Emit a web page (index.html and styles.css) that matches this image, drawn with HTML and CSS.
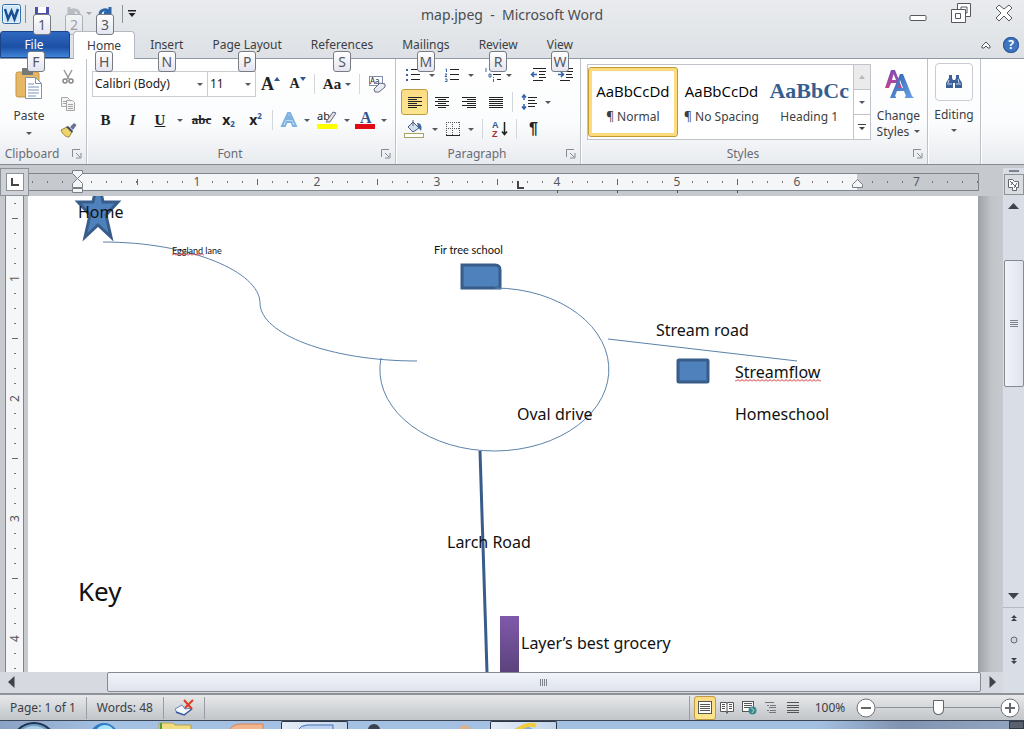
FILE: index.html
```html
<!DOCTYPE html>
<html lang="en">
<head>
    <meta charset="UTF-8">
    <meta name="viewport" content="width=device-width, initial-scale=1.0">
    <title>map.jpeg - Microsoft Word</title>
    <link rel="stylesheet" href="styles.css">
</head>
<body>
    <header class="titlebar">
        <div class="quick-access">
            <svg class="word-logo" width="19" height="20" viewBox="0 0 19 20">
                <rect x="0.5" y="0.5" width="18" height="19" rx="2" fill="#eaf4fc" stroke="#2f6ea8"/>
                <rect x="2" y="2" width="15" height="16" fill="#d3e6f5"/>
                <path d="M3 5l3 10 3.500-8 3 8 3.500-10" fill="none" stroke="#174f94" stroke-width="2.500"/>
            </svg>
            <span class="divider"></span>
            <button class="qa-btn" aria-label="Save">
                <svg width="16" height="16" viewBox="0 0 16 16"><rect x="1" y="1" width="14" height="14" fill="#4b50a8"/><rect x="4" y="1" width="8" height="6" fill="#fff"/><rect x="4" y="9" width="8" height="6" fill="#c8cbe8"/></svg>
                <kbd class="keytip">1</kbd>
            </button>
            <button class="qa-btn faded" aria-label="Undo">
                <svg width="16" height="16" viewBox="0 0 16 16"><path d="M3 1v6h6M3 7c3-5 10-4 10 2 0 3-2 5-5 5" fill="none" stroke="#8d949c" stroke-width="3"/></svg>
                <kbd class="keytip">2</kbd>
            </button>
            <span class="caret light"></span>
            <button class="qa-btn" aria-label="Redo">
                <svg width="16" height="16" viewBox="0 0 16 16"><path d="M13 1v6H7M13 7C10 2 3 3 3 9c0 3 2 5 5 5" fill="none" stroke="#2c66ad" stroke-width="3"/></svg>
                <kbd class="keytip">3</kbd>
            </button>
            <span class="divider"></span>
            <button class="qa-more" aria-label="Customize toolbar">
                <svg width="8" height="7" viewBox="0 0 8 7"><path d="M0 0h8v1.500H0zM0.500 3h7L4 7z" fill="#222"/></svg>
            </button>
        </div>
        <h1 class="title">map.jpeg &nbsp;-&nbsp; Microsoft Word</h1>
        <div class="window-buttons">
            <button aria-label="Minimize"><svg width="18" height="20" viewBox="0 0 18 20"><rect x="1" y="12.500" width="16" height="5" rx="1" fill="#fff" stroke="#55585e"/></svg></button>
            <button aria-label="Restore"><svg width="22" height="20" viewBox="0 0 22 20"><g fill="#fff" stroke="#55585e"><path d="M7.500 0.500h13v13h-13z"/><path d="M11 4h6v6h-6z"/><path d="M1.500 6.500h14v13h-14z"/><path d="M5.500 10.500h5v5h-5z"/></g></svg></button>
            <button aria-label="Close"><svg width="18" height="18" viewBox="0 0 18 18"><path d="M1 4L4 1l5 4 5-4 3 3-5 5 5 5-3 3-5-5-5 5-3-3 5-5z" fill="#fff" stroke="#55585e"/></svg></button>
        </div>
    </header>

    <nav class="tabs">
        <button class="tab file">File<kbd class="keytip">F</kbd></button>
        <button class="tab active">Home<kbd class="keytip">H</kbd></button>
        <button class="tab">Insert<kbd class="keytip">N</kbd></button>
        <button class="tab">Page Layout<kbd class="keytip">P</kbd></button>
        <button class="tab">References<kbd class="keytip">S</kbd></button>
        <button class="tab">Mailings<kbd class="keytip">M</kbd></button>
        <button class="tab">Review<kbd class="keytip">R</kbd></button>
        <button class="tab">View<kbd class="keytip">W</kbd></button>
        <div class="tab-tools">
            <button aria-label="Minimize ribbon"><svg width="10" height="8" viewBox="0 0 10 8"><path d="M1 5l4-4 4 4v2H7L5 5 3 7H1z" fill="#fff" stroke="#55585e"/></svg></button>
            <button class="help" aria-label="Help">?</button>
        </div>
    </nav>

    <section class="ribbon">
        <div class="group clipboard">
            <div class="group-body">
                <button class="big-btn">
                    <svg width="28" height="32" viewBox="0 0 28 32"><rect x="1" y="4" width="23" height="25" rx="2" fill="#e6b865" stroke="#c39445"/><rect x="7" y="0" width="11" height="7" fill="#777"/><path d="M10.500 9.500h10l6 6v15h-16z" fill="#fff" stroke="#8593ad"/><path d="M20.500 9.500v6h6M13 16h6M13 19h11M13 22h11M13 25h11M13 28h8" fill="none" stroke="#7c93bb"/></svg>
                    <span>Paste</span>
                    <span class="caret"></span>
                </button>
                <div class="clip-tools">
                    <button class="tool" aria-label="Cut"><svg width="12" height="16" viewBox="0 0 12 16"><path d="M2 1l5 9M10 1L5 10" stroke="#999" stroke-width="1.500"/><circle cx="3" cy="12" r="2" fill="none" stroke="#888" stroke-width="1.500"/><circle cx="9" cy="12" r="2" fill="none" stroke="#888" stroke-width="1.500"/></svg></button>
                    <button class="tool" aria-label="Copy"><svg width="16" height="14" viewBox="0 0 16 14"><g fill="#f4f4f4" stroke="#a5a5a5"><path d="M1.500 0.500h6l2 2v7h-8z"/><path d="M6.500 3.500h6l2 2v8h-8z"/><path d="M3 4.500h3M3 6.500h3M8 7.500h5M8 9.500h5M8 11.500h5"/></g></svg></button>
                    <button class="tool" aria-label="Format Painter"><svg width="17" height="15" viewBox="0 0 17 15"><path d="M1 7l6-3 5 5-3 5c-3 0-6-2-8-7z" fill="#ecd46b" stroke="#9c8438"/><path d="M6 4l2-1 5 5-1 2z" fill="#444a63"/><path d="M10 4l4-4 2.500 2L13 7z" fill="#6c7392"/></svg></button>
                </div>
            </div>
            <div class="group-label"><span>Clipboard</span><button class="launcher" aria-label="Clipboard options"><svg width="10" height="10" viewBox="0 0 10 10"><path d="M0.500 8V0.500H8M4 4l4 4M9 4v5H4" fill="none" stroke="#858b93"/></svg></button></div>
        </div>

        <div class="group font">
            <div class="group-body rows">
                <div class="row">
                    <select class="combo font-name" aria-label="Font"><option>Calibri (Body)</option></select>
                    <select class="combo font-size" aria-label="Font size"><option>11</option></select>
                    <button class="tool serif grow" aria-label="Grow font">A<svg width="6" height="4" viewBox="0 0 6 4"><path d="M3 0l3 4H0z" fill="#31558f"/></svg></button>
                    <button class="tool serif shrink" aria-label="Shrink font">A<svg width="6" height="4" viewBox="0 0 6 4"><path d="M0 0h6L3 4z" fill="#31558f"/></svg></button>
                    <span class="sep"></span>
                    <button class="tool split serif" aria-label="Change case">Aa<span class="caret"></span></button>
                    <span class="sep"></span>
                    <button class="tool" aria-label="Clear formatting"><svg width="18" height="18" viewBox="0 0 18 18"><rect x="1.500" y="1.500" width="13" height="9" fill="#fff" stroke="#7e8fae"/><text x="2" y="9" class="mini">Aa</text><path d="M6 14l6-6 5 1v3l-6 5H7z" fill="#e9ebf2" stroke="#626b80"/></svg></button>
                </div>
                <div class="row">
                    <button class="tool serif">B</button>
                    <button class="tool serif italic">I</button>
                    <button class="tool split serif"><u>U</u><span class="caret"></span></button>
                    <button class="tool serif strike">abc</button>
                    <button class="tool script">x<sub>2</sub></button>
                    <button class="tool script">x<sup>2</sup></button>
                    <span class="sep"></span>
                    <button class="tool split" aria-label="Text effects"><svg width="18" height="18" viewBox="0 0 18 18"><path d="M2 15L8 2h2l6 13h-3l-1.500-4h-5L5 15zM7 8.500h4L9 5z" fill="#fff" stroke="#7fb2e0" stroke-width="2"/></svg><span class="caret"></span></button>
                    <button class="tool split" aria-label="Highlight"><svg width="22" height="20" viewBox="0 0 22 20"><text x="1" y="10" class="ab">ab</text><path d="M10 12l7-10 3 1-6 9z" fill="#dfe3ec" stroke="#626b80"/><rect x="1" y="14" width="20" height="5" fill="#ffff00"/></svg><span class="caret"></span></button>
                    <button class="tool split" aria-label="Font color"><svg width="20" height="20" viewBox="0 0 20 20"><text x="5" y="13" class="color-a">A</text><rect x="0" y="14" width="20" height="5" fill="#e00b15"/></svg><span class="caret"></span></button>
                </div>
            </div>
            <div class="group-label"><span>Font</span><button class="launcher" aria-label="Font options"><svg width="10" height="10" viewBox="0 0 10 10"><path d="M0.500 8V0.500H8M4 4l4 4M9 4v5H4" fill="none" stroke="#858b93"/></svg></button></div>
        </div>

        <div class="group paragraph">
            <div class="group-body rows">
                <div class="row">
                    <button class="tool split" aria-label="Bullets"><svg width="15" height="14" viewBox="0 0 15 14"><path d="M5 1.500h9M5 6.500h9M5 11.500h9" stroke="#222"/><path d="M0 2h2M0 7h2M0 12h2" stroke="#3c64a0" stroke-width="2"/></svg><span class="caret"></span></button>
                    <button class="tool split" aria-label="Numbering"><svg width="15" height="14" viewBox="0 0 15 14"><path d="M5 1.500h9M5 6.500h9M5 11.500h9" stroke="#222"/><path d="M0.500 1h1v3M0 6h2L0 8.500h2M0 11h2v2.500H0" fill="none" stroke="#3c64a0"/></svg><span class="caret"></span></button>
                    <button class="tool split multilevel" aria-label="Multilevel list"><svg width="17" height="14" viewBox="0 0 17 14"><path d="M4 1.500h12M8 6.500h8M12 11.500h4" stroke="#222"/><path d="M1 0v4M4 6h2v3H4zM8.500 9v1M8.500 11v3" fill="none" stroke="#3c64a0"/></svg><span class="caret"></span></button>
                    <span class="space"></span>
                    <button class="tool" aria-label="Decrease indent"><svg width="15" height="14" viewBox="0 0 15 14"><path d="M2 0.500h13M8 3.500h7M8 6.500h6M8 9.500h7M2 12.500h10" stroke="#222"/><path d="M6 6.500H1M3 4L0.500 6.500 3 9" fill="none" stroke="#2f62ac" stroke-width="1.500"/></svg></button>
                    <button class="tool" aria-label="Increase indent"><svg width="15" height="14" viewBox="0 0 15 14"><path d="M2 0.500h13M8 3.500h7M8 6.500h6M8 9.500h7M2 12.500h10" stroke="#222"/><path d="M0 6.500h5M3 4l2.500 2.500L3 9" fill="none" stroke="#2f62ac" stroke-width="1.500"/></svg></button>
                </div>
                <div class="row">
                    <button class="tool pressed" aria-label="Align left"><svg width="14" height="11" viewBox="0 0 14 11"><path d="M0 0.500h14M0 2.500h9M0 4.500h14M0 6.500h9M0 8.500h14M0 10.500h9" stroke="#222"/></svg></button>
                    <button class="tool" aria-label="Center"><svg width="14" height="11" viewBox="0 0 14 11"><path d="M0 0.500h14M3 2.500h8M0 4.500h14M3 6.500h8M0 8.500h14M3 10.500h8" stroke="#222"/></svg></button>
                    <button class="tool" aria-label="Align right"><svg width="14" height="11" viewBox="0 0 14 11"><path d="M0 0.500h14M5 2.500h9M0 4.500h14M5 6.500h9M0 8.500h14M5 10.500h9" stroke="#222"/></svg></button>
                    <button class="tool" aria-label="Justify"><svg width="14" height="11" viewBox="0 0 14 11"><path d="M0 0.500h14M0 2.500h14M0 4.500h14M0 6.500h14M0 8.500h14M0 10.500h14" stroke="#222"/></svg></button>
                    <span class="sep"></span>
                    <button class="tool split" aria-label="Line spacing"><svg width="16" height="16" viewBox="0 0 16 16"><path d="M7 3.500h9M7 6.500h7M7 9.500h9M7 12.500h7" stroke="#222"/><path d="M3 1v5M1 3.500L3 1l2 2.500M3 10v5M1 12.500L3 15l2-2.500" fill="none" stroke="#2f62ac" stroke-width="1.500"/></svg><span class="caret"></span></button>
                </div>
                <div class="row">
                    <button class="tool split" aria-label="Shading"><svg width="20" height="18" viewBox="0 0 20 18"><path d="M4 7l5-5 6 6-6 4z" fill="#d5deec" stroke="#4c5f84"/><path d="M9 6V0" stroke="#4c5f84"/><path d="M13 3c5 0 5 5 4 8l-3-4z" fill="#44669b"/><rect x="0.500" y="13.500" width="19" height="4" fill="#fff" stroke="#a8a567"/></svg><span class="caret"></span></button>
                    <button class="tool split" aria-label="Borders"><svg width="14" height="14" viewBox="0 0 14 14"><path d="M0.500 0v13M13.500 0v13M6.500 0v13M0 0.500h13M0 6.500h13" stroke="#555" stroke-dasharray="1 1"/><path d="M0 13.500h14" stroke="#222"/></svg><span class="caret"></span></button>
                    <span class="sep"></span>
                    <button class="tool" aria-label="Sort"><svg width="16" height="18" viewBox="0 0 16 18"><text x="0" y="8" class="sort-a">A</text><text x="0" y="17" class="sort-z">Z</text><path d="M12.500 2v12M10 11.500l2.500 3 2.500-3" fill="none" stroke="#222" stroke-width="1.500"/></svg></button>
                    <span class="sep"></span>
                    <button class="tool pilcrow" aria-label="Show marks">¶</button>
                </div>
            </div>
            <div class="group-label"><span>Paragraph</span><button class="launcher" aria-label="Paragraph options"><svg width="10" height="10" viewBox="0 0 10 10"><path d="M0.500 8V0.500H8M4 4l4 4M9 4v5H4" fill="none" stroke="#858b93"/></svg></button></div>
        </div>

        <div class="group styles">
            <div class="group-body">
                <div class="gallery">
                    <button class="style-card selected"><span class="sample">AaBbCcDd</span><span>¶ Normal</span></button>
                    <button class="style-card"><span class="sample">AaBbCcDd</span><span>¶ No Spacing</span></button>
                    <button class="style-card"><span class="sample heading">AaBbCc</span><span>Heading 1</span></button>
                    <div class="gallery-scroll">
                        <button class="dim" aria-label="Previous row"><svg width="6" height="4" viewBox="0 0 6 4"><path d="M3 0l3 4H0z" fill="#b5b9be"/></svg></button>
                        <button aria-label="Next row"><span class="caret"></span></button>
                        <button aria-label="More styles"><svg width="8" height="7" viewBox="0 0 8 7"><path d="M0 0h8v1H0zM1 3h6L4 6z" fill="#444"/></svg></button>
                    </div>
                </div>
                <button class="big-btn change-styles">
                    <svg width="30" height="32" viewBox="0 0 30 32">
                        <defs>
                            <linearGradient id="purple" x1="0" y1="0" x2="0" y2="1"><stop offset="0" stop-color="#7d4fb5"/><stop offset="1" stop-color="#c04391"/></linearGradient>
                            <linearGradient id="blue" x1="0" y1="0" x2="1" y2="1"><stop offset="0" stop-color="#2f5fae"/><stop offset="1" stop-color="#6ba2e6"/></linearGradient>
                        </defs>
                        <path d="M1 20L7 2h4l7 18h-4l-2-5H7l-2 5zM8 12h4L9.500 6z" fill="url(#purple)"/>
                        <path fill-rule="evenodd" d="M6 30L16 6h3l9 22 2 2h-9v-1l1-1-2-5h-7l-2 5 1 1v1zM14 20h5l-3-8z" fill="url(#blue)"/>
                    </svg>
                    <span>Change<br>Styles <i class="caret"></i></span>
                </button>
            </div>
            <div class="group-label"><span>Styles</span><button class="launcher" aria-label="Styles options"><svg width="10" height="10" viewBox="0 0 10 10"><path d="M0.500 8V0.500H8M4 4l4 4M9 4v5H4" fill="none" stroke="#858b93"/></svg></button></div>
        </div>

        <div class="group editing">
            <button class="big-btn">
                <span class="icon-box">
                    <svg width="16" height="14" viewBox="0 0 16 14"><path d="M3 0h3v3l1 2v8H0V8l3-5zM10 0h3v3l3 5v5H9V5l1-2z" fill="#3b5f97"/><path d="M6 5h4v3H6z" fill="#3b5f97"/><path d="M1 9h5M10 9h5M3 5l-1 3M12 4l1 4" stroke="#c5d6ee"/></svg>
                </span>
                <span>Editing</span>
                <span class="caret"></span>
            </button>
        </div>
    </section>

    <main class="workspace">
        <div class="editor">
            <div class="ruler-row">
                <button class="tab-stop" aria-label="Tab selector"><span><svg width="8" height="8" viewBox="0 0 8 8"><path d="M1 0v7H8" fill="none" stroke="#444" stroke-width="2"/></svg></span></button>
                <div class="ruler">
                    <span class="inch margin-left"></span>
                    <span class="inch half"></span>
                    <span class="inch"><b>1</b></span>
                    <span class="inch"><b>2</b></span>
                    <span class="inch"><b>3</b></span>
                    <span class="inch"><b>4</b></span>
                    <span class="inch"><b>5</b></span>
                    <span class="inch"><b>6</b></span>
                    <span class="inch last"><b>7</b></span>
                    <svg class="markers" width="950" height="24" viewBox="0 0 950 24">
                        <g fill="#f4f5f7" stroke="#7a7f86">
                            <path d="M43.500 0.500h10v3l-5 5-5-5z"/>
                            <path d="M43.500 17.500v-4l5-5 5 5v4z"/>
                            <path d="M43.500 18.500h10v4h-10z"/>
                            <path d="M823.500 17.500v-3l5-5 5 5v3z"/>
                        </g>
                        <path d="M489 11v7h6" fill="none" stroke="#444" stroke-width="2"/>
                        <path d="M528.500 20v3M588.500 20v3M648.500 20v3M708.500 20v3" stroke="#555"/>
                    </svg>
                </div>
            </div>

            <div class="document">
                <div class="side-ruler">
                    <span class="inch"><b>1</b></span>
                    <span class="inch"><b>2</b></span>
                    <span class="inch"><b>3</b></span>
                    <span class="inch"><b>4</b></span>
                </div>
                <div class="page">
                    <svg class="map" width="950" height="476" viewBox="0 0 950 476">
                        <defs>
                            <linearGradient id="store" x1="0" y1="0" x2="0" y2="1"><stop offset="0" stop-color="#8059ab"/><stop offset="1" stop-color="#5b437c"/></linearGradient>
                            <pattern id="squiggle" width="4" height="3" patternUnits="userSpaceOnUse"><path d="M0 2.500L2 0.500 4 2.500" fill="none" stroke="#d8262c"/></pattern>
                        </defs>
                        <g class="building">
                            <path d="M70-18L75 6H90L78 19 83 41 70 29 57 41 62 19 50 6H65z"/>
                            <path d="M434 69h33q5 0 5 5v18h-38z"/>
                            <rect x="650" y="164" width="30" height="22" rx="1"/>
                        </g>
                        <g class="street">
                            <path d="M75 46C162 46 232 76 232 107S302 165 389 165"/>
                            <path d="M467 92A114.500 81.500 0 1 1 353 162"/>
                            <path d="M580 143L769 165"/>
                        </g>
                        <path class="road" d="M452 255L459 476"/>
                        <rect x="472" y="420" width="19" height="56" fill="url(#store)"/>
                        <text x="50" y="22">Home</text>
                        <text x="144" y="58" class="tiny">Eggland lane</text>
                        <rect x="144" y="57" width="32" height="3" fill="url(#squiggle)"/>
                        <text x="406" y="58" class="small">Fir tree school</text>
                        <text x="628" y="140">Stream road</text>
                        <text x="707" y="182">Streamflow</text>
                        <rect x="707" y="183" width="86" height="3" fill="url(#squiggle)"/>
                        <text x="707" y="224">Homeschool</text>
                        <text x="489" y="224">Oval drive</text>
                        <text x="419" y="352">Larch Road</text>
                        <text x="50" y="405" class="large">Key</text>
                        <text x="493" y="453">Layer’s best grocery</text>
                    </svg>
                </div>
            </div>

            <div class="h-scroll">
                <button aria-label="Scroll left"><svg width="7" height="12" viewBox="0 0 7 12"><path d="M6.500 0v12L0 6z" fill="#3f4349"/></svg></button>
                <div class="h-track"><div class="h-thumb"></div></div>
                <button aria-label="Scroll right"><svg width="7" height="12" viewBox="0 0 7 12"><path d="M0.500 0v12L7 6z" fill="#3f4349"/></svg></button>
            </div>
        </div>

        <aside class="v-scroll">
            <span class="split-bar"></span>
            <button class="ruler-toggle" aria-label="View ruler"><svg width="12" height="12" viewBox="0 0 12 12"><g fill="#fff" stroke="#62676e"><path d="M0.500 0.500h4l2 2h4v6h-2v3h-4v-3h-4z"/><path d="M2 2l6 6M5 3L3 6M9 4L6 9" fill="none"/></g></svg></button>
            <button class="scroll-btn" aria-label="Scroll up"><svg width="11" height="6" viewBox="0 0 11 6"><path d="M5.500 0L11 6H0z" fill="#3f4349"/></svg></button>
            <div class="v-track"><div class="v-thumb"></div></div>
            <button class="scroll-btn" aria-label="Scroll down"><svg width="11" height="6" viewBox="0 0 11 6"><path d="M0 0h11L5.500 6z" fill="#3f4349"/></svg></button>
            <div class="browse">
                <button aria-label="Previous page"><svg width="6" height="7" viewBox="0 0 6 7"><path d="M3 0l3 3H0zM3 3l3 3H0z" fill="#3f4349"/></svg></button>
                <button aria-label="Select browse object"><svg width="8" height="8" viewBox="0 0 8 8"><circle cx="4" cy="4" r="3" fill="#d0d3d8" stroke="#62676e"/></svg></button>
                <button aria-label="Next page"><svg width="6" height="7" viewBox="0 0 6 7"><path d="M0 0h6L3 3zM0 3h6L3 6z" fill="#3f4349"/></svg></button>
            </div>
        </aside>
    </main>

    <footer class="statusbar">
        <button class="status-item">Page: 1 of 1</button>
        <button class="status-item">Words: 48</button>
        <button class="status-item" aria-label="Proofing errors"><svg width="20" height="20" viewBox="0 0 20 20"><path d="M1 11l7-4 3 4 7-1-7 7-8-2z" fill="#f4f7fc" stroke="#6885bb"/><path d="M2 14l8 3 8-6" fill="none" stroke="#3a5ea4" stroke-width="1.500"/><path d="M10 2l8 9M19 2l-8 8" stroke="#dd3b22" stroke-width="2"/></svg></button>
        <div class="views">
            <button class="view pressed" aria-label="Print layout"><svg width="14" height="13" viewBox="0 0 14 13"><rect x="0.500" y="0.500" width="13" height="12" fill="#fff" stroke="#555"/><path d="M2 3.500h10M2 5.500h10M2 7.500h10M2 9.500h10" stroke="#555"/></svg></button>
            <button class="view" aria-label="Full screen reading"><svg width="14" height="13" viewBox="0 0 14 13"><path d="M0.500 1.500l6 0 0.500 1 0.500-1h6v9h-6l-0.500 2-0.500-2h-6zM7 2v10" fill="#fff" stroke="#555"/><path d="M2 3.500h3M2 5.500h3M2 7.500h3M9 3.500h3M9 5.500h3M9 7.500h3" stroke="#555"/></svg></button>
            <button class="view" aria-label="Web layout"><svg width="15" height="14" viewBox="0 0 15 14"><rect x="0.500" y="0.500" width="11" height="10" fill="#fff" stroke="#555"/><path d="M2 2.500h8M2 4.500h8M2 6.500h6" stroke="#555"/><circle cx="10.500" cy="9.500" r="4" fill="#3b8a93"/><path d="M9 7l3 2-2 3" fill="none" stroke="#a7d8b0"/></svg></button>
            <button class="view" aria-label="Outline"><svg width="12" height="12" viewBox="0 0 12 12"><path d="M0 0.500h9M2 3.500h2M5 3.500h6M4 5.500h7M2 8.500h2M5 8.500h6M4 10.500h7" stroke="#777"/></svg></button>
            <button class="view" aria-label="Draft"><svg width="12" height="12" viewBox="0 0 12 12"><path d="M0 0.500h12M0 3.500h12M0 5.500h12M0 8.500h12M0 10.500h12" stroke="#555"/></svg></button>
        </div>
        <button class="zoom-level">100%</button>
        <button class="zoom-btn" aria-label="Zoom out"><svg width="20" height="20" viewBox="0 0 20 20"><circle cx="10" cy="10" r="9" fill="#fff" stroke="#6e7379"/><path d="M5 10h10" stroke="#62676e" stroke-width="2"/></svg></button>
        <input class="zoom-slider" type="range" min="0" max="100" value="50" aria-label="Zoom">
        <button class="zoom-btn" aria-label="Zoom in"><svg width="20" height="20" viewBox="0 0 20 20"><circle cx="10" cy="10" r="9" fill="#fff" stroke="#6e7379"/><path d="M5 10h10M10 5v10" stroke="#62676e" stroke-width="2"/></svg></button>
    </footer>

    <nav class="taskbar">
        <button class="task" aria-label="Start"><svg width="42" height="9" viewBox="0 0 42 9"><circle cx="21" cy="24" r="22" fill="#6f9cc4" stroke="#20344f" stroke-width="2"/><circle cx="21" cy="24" r="19" fill="#a9cbe4"/></svg></button>
        <button class="task" aria-label="Internet Explorer"><svg width="32" height="9" viewBox="0 0 32 9"><ellipse cx="16" cy="18" rx="15" ry="16" fill="#2d7cc4"/><ellipse cx="17" cy="12" rx="9" ry="8" fill="#a7e2fa"/></svg></button>
        <button class="task" aria-label="Explorer"><svg width="34" height="9" viewBox="0 0 34 9"><path d="M1 9V2h14l2 2h16v5z" fill="#f2dc82" stroke="#b0a04e"/><path d="M3 2v7" stroke="#4d9d3c" stroke-width="2"/></svg></button>
        <button class="task" aria-label="Media Player"><svg width="36" height="9" viewBox="0 0 36 9"><path d="M1 9q4-6 12-6h22v6z" fill="#f0b58c" stroke="#d98758"/></svg></button>
        <button class="task open" aria-label="Word"><svg width="38" height="9" viewBox="0 0 38 9"><path d="M1 9q4-6 10-6h26v6z" fill="#bcd2f0" stroke="#4270b5"/></svg></button>
        <button class="task" aria-label="Messenger"><svg width="32" height="9" viewBox="0 0 32 9"><circle cx="6" cy="9" r="6" fill="#39424f"/></svg></button>
        <button class="task" aria-label="Contacts"><svg width="32" height="9" viewBox="0 0 32 9"><circle cx="26" cy="10" r="6" fill="#dcb18c"/></svg></button>
        <button class="task open" aria-label="Browser"><svg width="32" height="9" viewBox="0 0 32 9"><ellipse cx="16" cy="14" rx="13" ry="10" fill="#7fb3de"/><path d="M8 9q12-9 20-5" fill="none" stroke="#f0cc3e" stroke-width="4"/></svg></button>
        <button class="show-desktop" aria-label="Show desktop"></button>
    </nav>
</body>
</html>
```

FILE: styles.css
```css
* {
    box-sizing: border-box;
}

body {
    margin: 0;
    height: 100vh;
    display: flex;
    flex-direction: column;
    overflow: hidden;
    font-family: "Noto Sans", "Open Sans", sans-serif;
    font-size: 12px;
    line-height: 16px;
    color: #3b3e44;
    background: #e1e4e8;
}

button {
    font: inherit;
    color: inherit;
    border: none;
    background: none;
    padding: 0;
    margin: 0;
    white-space: nowrap;
}

svg {
    display: block;
    flex: none;
    overflow: visible;
}

.caret {
    display: inline-block;
    flex: none;
    border: 3px solid transparent;
    border-top-color: #55585e;
    border-bottom: none;
}

.caret.light {
    border-top-color: #a3a8ae;
}

.keytip {
    position: absolute;
    left: 50%;
    top: 20px;
    width: 18px;
    height: 21px;
    margin-left: -9px;
    border: 1px solid #777b82;
    border-radius: 3px;
    background: linear-gradient(#ffffff, #e4e5f0);
    font-family: inherit;
    font-size: 14px;
    line-height: 20px;
    text-align: center;
    color: #55585e;
    z-index: 5;
}

/* Title bar */
.titlebar {
    flex: none;
    height: 31px;
    display: grid;
    grid-template-columns: 1fr auto 1fr;
    align-items: start;
    background: linear-gradient(#e9ebee, #e3e6e9);
}

.quick-access {
    display: flex;
    align-items: center;
    height: 27px;
    padding-left: 2px;
}

.divider {
    width: 1px;
    height: 18px;
    margin: 0 8px 0 4px;
    background: #8d9299;
}

.qa-btn {
    position: relative;
    width: 16px;
}

.qa-btn + .qa-btn {
    margin-left: 16px;
}

.qa-btn .keytip {
    top: 8px;
}

.qa-btn.faded {
    opacity: 0.5;
}

.quick-access .caret {
    margin: 0 5px 0 4px;
}

.quick-access .qa-btn + .divider {
    margin-left: 9px;
    margin-right: 5px;
}

.title {
    margin: 0;
    font-size: 14px;
    font-weight: normal;
    line-height: 30px;
    color: #4a4d52;
}

.window-buttons {
    display: flex;
    justify-content: flex-end;
    align-items: center;
    gap: 23px;
    padding: 3px 11px 0 0;
}

/* Ribbon tabs */
.tabs {
    flex: none;
    height: 28px;
    display: flex;
    gap: 1px;
    background: linear-gradient(#e3e6e9, #dde0e4);
    border-bottom: 1px solid #8f9aa8;
}

.tab {
    position: relative;
    padding: 0 14px;
    height: 27px;
}

.tab.file {
    width: 70px;
    margin-right: 2px;
    padding-right: 16px;
    color: #fff;
    background: linear-gradient(#2f68c0, #1c50a5 60%, #3f84d8);
    border: 1px solid #1a4588;
    border-radius: 3px 3px 0 0;
}

.tab.file .keytip {
    margin-left: -8px;
    top: 19px;
}

.tab.active {
    height: 28px;
    background: #fff;
    border: 1px solid #b4bac2;
    border-bottom: none;
    border-radius: 4px 4px 0 0;
    padding: 0 13px;
}

.tab.active .keytip {
    top: 19px;
}

.tab-tools {
    margin-left: auto;
    display: flex;
    align-items: center;
    gap: 12px;
    padding-right: 5px;
}

.help {
    width: 16px;
    height: 16px;
    border-radius: 50%;
    background: #3f74c0;
    box-shadow: 0 0 0 1px #2d5594 inset;
    color: #fff;
    font-weight: bold;
    line-height: 16px;
}

/* Ribbon */
.ribbon {
    flex: none;
    height: 106px;
    display: flex;
    background: linear-gradient(#ffffff, #fbfcfd 60%, #e8ebef);
    border-bottom: 1px solid #868b92;
}

.group {
    display: flex;
    flex-direction: column;
    border-right: 1px solid #bcc1c8;
    box-shadow: 1px 0 #fff;
}

.group-body {
    flex: 1;
    display: flex;
}

.group-body.rows {
    flex-direction: column;
}

.group-label {
    display: flex;
    align-items: center;
    height: 19px;
    padding-right: 4px;
    margin-bottom: 1px;
    color: #686c73;
}

.group-label span {
    flex: 1;
    text-align: center;
    padding-right: 8px;
}

.row {
    display: flex;
    align-items: center;
}

.tool {
    display: flex;
    align-items: center;
    justify-content: center;
    width: 27px;
    height: 26px;
    color: #222;
}

.tool.split {
    width: 38px;
    gap: 6px;
}

.sep {
    width: 1px;
    height: 20px;
    margin: 0 3px;
    background: #d3d6da;
}

.space {
    width: 7px;
}

.big-btn {
    display: flex;
    flex-direction: column;
    align-items: center;
}

.clipboard {
    width: 87px;
}

.clipboard .big-btn {
    width: 58px;
    padding-top: 9px;
    gap: 8px;
}

.clip-tools {
    padding-top: 4px;
    width: 20px;
}

.clip-tools .tool {
    width: 20px;
    height: 27px;
}

.font {
    width: 309px;
}

.font .rows {
    padding: 12px 0 0 5px;
    gap: 10px;
}

.combo {
    appearance: none;
    height: 26px;
    padding: 0 2px;
    border: 1px solid #c9cdd2;
    border-radius: 0;
    background: #fff url("data:image/svg+xml,%3Csvg xmlns='http://www.w3.org/2000/svg' width='6' height='3'%3E%3Cpath d='M0 0h6L3 3z' fill='%2355585e'/%3E%3C/svg%3E") no-repeat right 4px center;
    font: inherit;
    color: #222;
}

.font-name {
    width: 116px;
}

.font-size {
    width: 48px;
    margin-right: 1px;
    border-left: none;
}

.serif {
    font-family: "Liberation Serif", serif;
    font-weight: bold;
    font-size: 15px;
}

.serif svg {
    margin-bottom: 10px;
}

.grow {
    font-size: 18px;
}

.shrink {
    font-size: 14px;
}

.font .tool.split.serif {
    gap: 4px;
}

.font .row + .row .tool.split.serif {
    gap: 12px;
    width: 42px;
    padding-left: 4px;
}

.italic {
    font-style: italic;
}

.strike {
    font-size: 13px;
    text-decoration: line-through;
}

.script {
    font-size: 14px;
    font-weight: bold;
}

.script sub,
.script sup {
    font-size: 8px;
    color: #31558f;
    line-height: 8px;
}

.script sub {
    margin-top: 8px;
}

.script sup {
    margin-bottom: 8px;
}

.mini {
    font-size: 8px;
    fill: #222;
}

.ab {
    font-size: 11px;
    fill: #222;
}

.color-a {
    font: bold 16px "Liberation Serif", serif;
    fill: #31558f;
}

.paragraph {
    width: 185px;
}

.paragraph .rows {
    padding: 3px 0 0 5px;
    gap: 1px;
}

.paragraph .tool.split {
    width: 39px;
    gap: 8px;
}

.paragraph .tool.multilevel {
    gap: 4px;
}

.tool.pressed,
.view.pressed {
    background: linear-gradient(#fbdc84, #fce58f);
    border: 1px solid #c29b3e;
    border-radius: 3px;
}

.sort-a,
.sort-z {
    font: bold 9px "Liberation Sans", sans-serif;
    fill: #31558f;
}

.sort-z {
    fill: #a33030;
}

.pilcrow {
    font-family: "Liberation Sans", sans-serif;
    font-size: 16px;
    font-weight: bold;
}

.styles {
    width: 347px;
}

.styles .group-body {
    padding: 5px 0 5px 6px;
}

.gallery {
    display: flex;
    width: 284px;
    border: 1px solid #c0c4ca;
    background: #fff;
}

.style-card {
    flex: 1;
    display: flex;
    flex-direction: column;
    align-items: center;
    gap: 8px;
    margin: 2px 0;
    padding-top: 14px;
    min-width: 0;
}

.style-card.selected {
    border: 1px solid #c09a35;
    border-radius: 3px;
    box-shadow: inset 0 0 0 3px #fbdb7c;
    padding-top: 13px;
}

.sample {
    width: 100%;
    padding: 0 4px;
    font-family: "Open Sans", sans-serif;
    font-size: 15px;
    line-height: 20px;
    text-align: center;
    color: #000;
}

.sample.heading {
    font-family: "Liberation Serif", serif;
    font-weight: bold;
    font-size: 22px;
    color: #365f91;
}

.gallery-scroll {
    width: 17px;
    display: flex;
    flex-direction: column;
    border-left: 1px solid #c0c4ca;
}

.gallery-scroll button {
    flex: 1;
    display: flex;
    align-items: center;
    justify-content: center;
    border-bottom: 1px solid #c0c4ca;
}

.gallery-scroll button:last-child {
    border-bottom: none;
}

.gallery-scroll .dim {
    background: #ebebec;
}

.change-styles {
    width: 55px;
    padding-top: 4px;
    gap: 8px;
}

.change-styles .caret {
    margin: 0 0 3px 2px;
}

.editing {
    width: 53px;
}

.editing .big-btn {
    padding-top: 4px;
    gap: 6px;
}

.icon-box {
    width: 38px;
    height: 38px;
    display: flex;
    align-items: center;
    justify-content: center;
    border: 1px solid #c9cdd3;
    border-radius: 4px;
}

/* Workspace */
.workspace {
    flex: 1;
    min-height: 0;
    display: grid;
    grid-template-columns: minmax(0, 1fr) 21px;
    padding-top: 3px;
    background: #c6cacf;
}

.editor {
    display: flex;
    flex-direction: column;
    min-width: 0;
    min-height: 0;
}

.ruler-row {
    flex: none;
    display: flex;
    height: 28px;
    padding-right: 24px;
}

.tab-stop {
    width: 29px;
    padding: 4px 4px 4px 5px;
    border: 1px solid #8d9299;
    background: #ced2d7;
}

.tab-stop span {
    height: 18px;
    display: flex;
    align-items: center;
    justify-content: center;
    border: 1px solid #8d9299;
    background: #fff;
}

.ruler {
    position: relative;
    flex: 1;
    display: flex;
    height: 18px;
    margin-top: 5px;
    border: 1px solid #7f858c;
    border-left: none;
    background: linear-gradient(90deg, #c6cacf 48px, #f5f6f7 48px, #f5f6f7 828px, #c6cacf 828px);
}

.inch {
    flex: none;
    width: 120px;
    display: flex;
    justify-content: center;
    align-items: center;
    background:
        linear-gradient(#666, #666) left center / 1px 6px no-repeat,
        linear-gradient(90deg, #777 1px, transparent 1px) left center / 15px 2px repeat-x;
}

.inch b {
    padding: 0 2px;
    font-weight: normal;
    color: #55585e;
    background: #f5f6f7;
}

.inch.margin-left {
    width: 48px;
    background: linear-gradient(90deg, #777 1px, transparent 1px) 3px center / 15px 2px repeat-x;
}

.inch.half {
    width: 60px;
    background: linear-gradient(90deg, transparent 14px, #777 14px) left center / 15px 2px repeat-x;
}

.ruler .last {
    flex: 1 1 0;
    justify-content: flex-start;
    padding-left: 54px;
}

.ruler .last b {
    background: #c6cacf;
}

.markers {
    position: absolute;
    left: 0;
    top: -4px;
}

.document {
    flex: 1;
    min-height: 0;
    display: flex;
    padding-right: 25px;
    background: linear-gradient(90deg, #c6cacf calc(100% - 25px), #9da2a8 calc(100% - 25px), #c0c4c9 calc(100% - 12px), #c6cacf);
}

.side-ruler {
    flex: none;
    width: 19px;
    margin: 0 4px 0 5px;
    padding-top: 22px;
    overflow: hidden;
    border: solid #7f858c;
    border-width: 0 1px;
    background: #f5f6f7 linear-gradient(#777 1px, transparent 1px) center 7px / 2px 15px repeat-y;
}

.side-ruler .inch {
    width: 17px;
    height: 120px;
    background: linear-gradient(#666, #666) center top / 6px 1px no-repeat;
}

.side-ruler b {
    writing-mode: vertical-rl;
    transform: rotate(180deg);
}

.page {
    flex: 1;
    min-width: 0;
    overflow: hidden;
    background: #fff;
}

.map text {
    font-size: 16px;
    fill: #111;
}

.map .tiny {
    font-family: Lato, sans-serif;
    font-size: 9px;
}

.map .small {
    font-family: Lato, sans-serif;
    font-size: 11px;
}

.map .large {
    font-size: 26px;
}

.building {
    fill: #4f81bd;
    stroke: #385d8a;
    stroke-width: 3;
}

.street {
    fill: none;
    stroke: #5b82aa;
}

.road {
    stroke: #385d8a;
    stroke-width: 3;
}

/* Scrollbars */
.h-scroll {
    flex: none;
    display: flex;
    height: 21px;
    padding-bottom: 1px;
    background: #d6dae0;
}

.h-scroll button {
    width: 22px;
    display: flex;
    align-items: center;
    justify-content: center;
}

.h-track {
    flex: 1;
    padding-left: 85px;
}

.h-thumb {
    height: 20px;
    border: 1px solid #858a93;
    border-radius: 2px;
    background:
        repeating-linear-gradient(90deg, #7d838c 0 1px, transparent 1px 2px) center / 8px 7px no-repeat,
        linear-gradient(#f1f4fa, #dfe3ec);
}

.v-scroll {
    display: flex;
    flex-direction: column;
    align-items: center;
    background: #d9dde6;
}

.split-bar {
    width: 10px;
    height: 2px;
    margin: 2px 0;
    background: #7d838c;
}

.ruler-toggle {
    width: 20px;
    height: 21px;
    display: flex;
    align-items: center;
    justify-content: center;
    border: 1px solid #8d9299;
    background: #d9dce1;
}

.scroll-btn {
    height: 22px;
    display: flex;
    align-items: center;
}

.v-track {
    flex: 1;
    width: 20px;
    padding-top: 43px;
}

.v-thumb {
    height: 39%;
    border: 1px solid #858a93;
    border-radius: 2px;
    background:
        repeating-linear-gradient(#7d838c 0 1px, transparent 1px 2px) center / 8px 7px no-repeat,
        linear-gradient(90deg, #f1f4fa, #dfe3ec);
}

.browse {
    width: 100%;
    display: flex;
    flex-direction: column;
    align-items: center;
    gap: 14px;
    padding: 7px 0 28px;
    border-top: 1px solid #b5bac2;
}

/* Status bar */
.statusbar {
    flex: none;
    height: 27px;
    display: flex;
    align-items: center;
    padding-right: 4px;
    border-top: 2px solid #8f9399;
    background: linear-gradient(#e6e8ea, #c2c5c9);
}

.status-item {
    height: 22px;
    display: flex;
    align-items: center;
    padding: 0 10px;
    border-right: 1px solid #9a9ea4;
}

.views {
    margin-left: auto;
    display: flex;
    align-items: center;
    padding-left: 4px;
    border-left: 1px solid #9a9ea4;
}

.view {
    width: 22px;
    height: 24px;
    display: flex;
    align-items: center;
    justify-content: center;
}

.zoom-level {
    width: 52px;
    text-align: center;
}

.zoom-slider {
    appearance: none;
    width: 124px;
    height: 20px;
    margin: 0;
    background: linear-gradient(#8d9299, #8d9299) center / 100% 1px no-repeat;
}

.zoom-slider::-webkit-slider-thumb {
    appearance: none;
    width: 11px;
    height: 15px;
    border: 1px solid #62676e;
    border-radius: 1px 1px 6px 6px;
    background: #fff;
}

/* Taskbar */
.taskbar {
    flex: none;
    height: 9px;
    display: flex;
    overflow: hidden;
    border-top: 1px solid #3c4554;
    background: linear-gradient(90deg, #8aa2c4, #a4c0e2 10%, #a3bfe1 80%, #8193b0 88%, #93a6c2);
}

.task {
    width: 71px;
    display: flex;
    justify-content: center;
}

.task:first-child {
    width: 68px;
}

.task.open {
    width: 67px;
    border: 1px solid #2c3647;
    border-bottom: none;
    background: linear-gradient(90deg, #e3ecf6, #c3d5ea);
    border-radius: 2px 2px 0 0;
}

.show-desktop {
    width: 15px;
    margin-left: auto;
    background: #59616f;
    border: 1px solid #333a46;
}
```
